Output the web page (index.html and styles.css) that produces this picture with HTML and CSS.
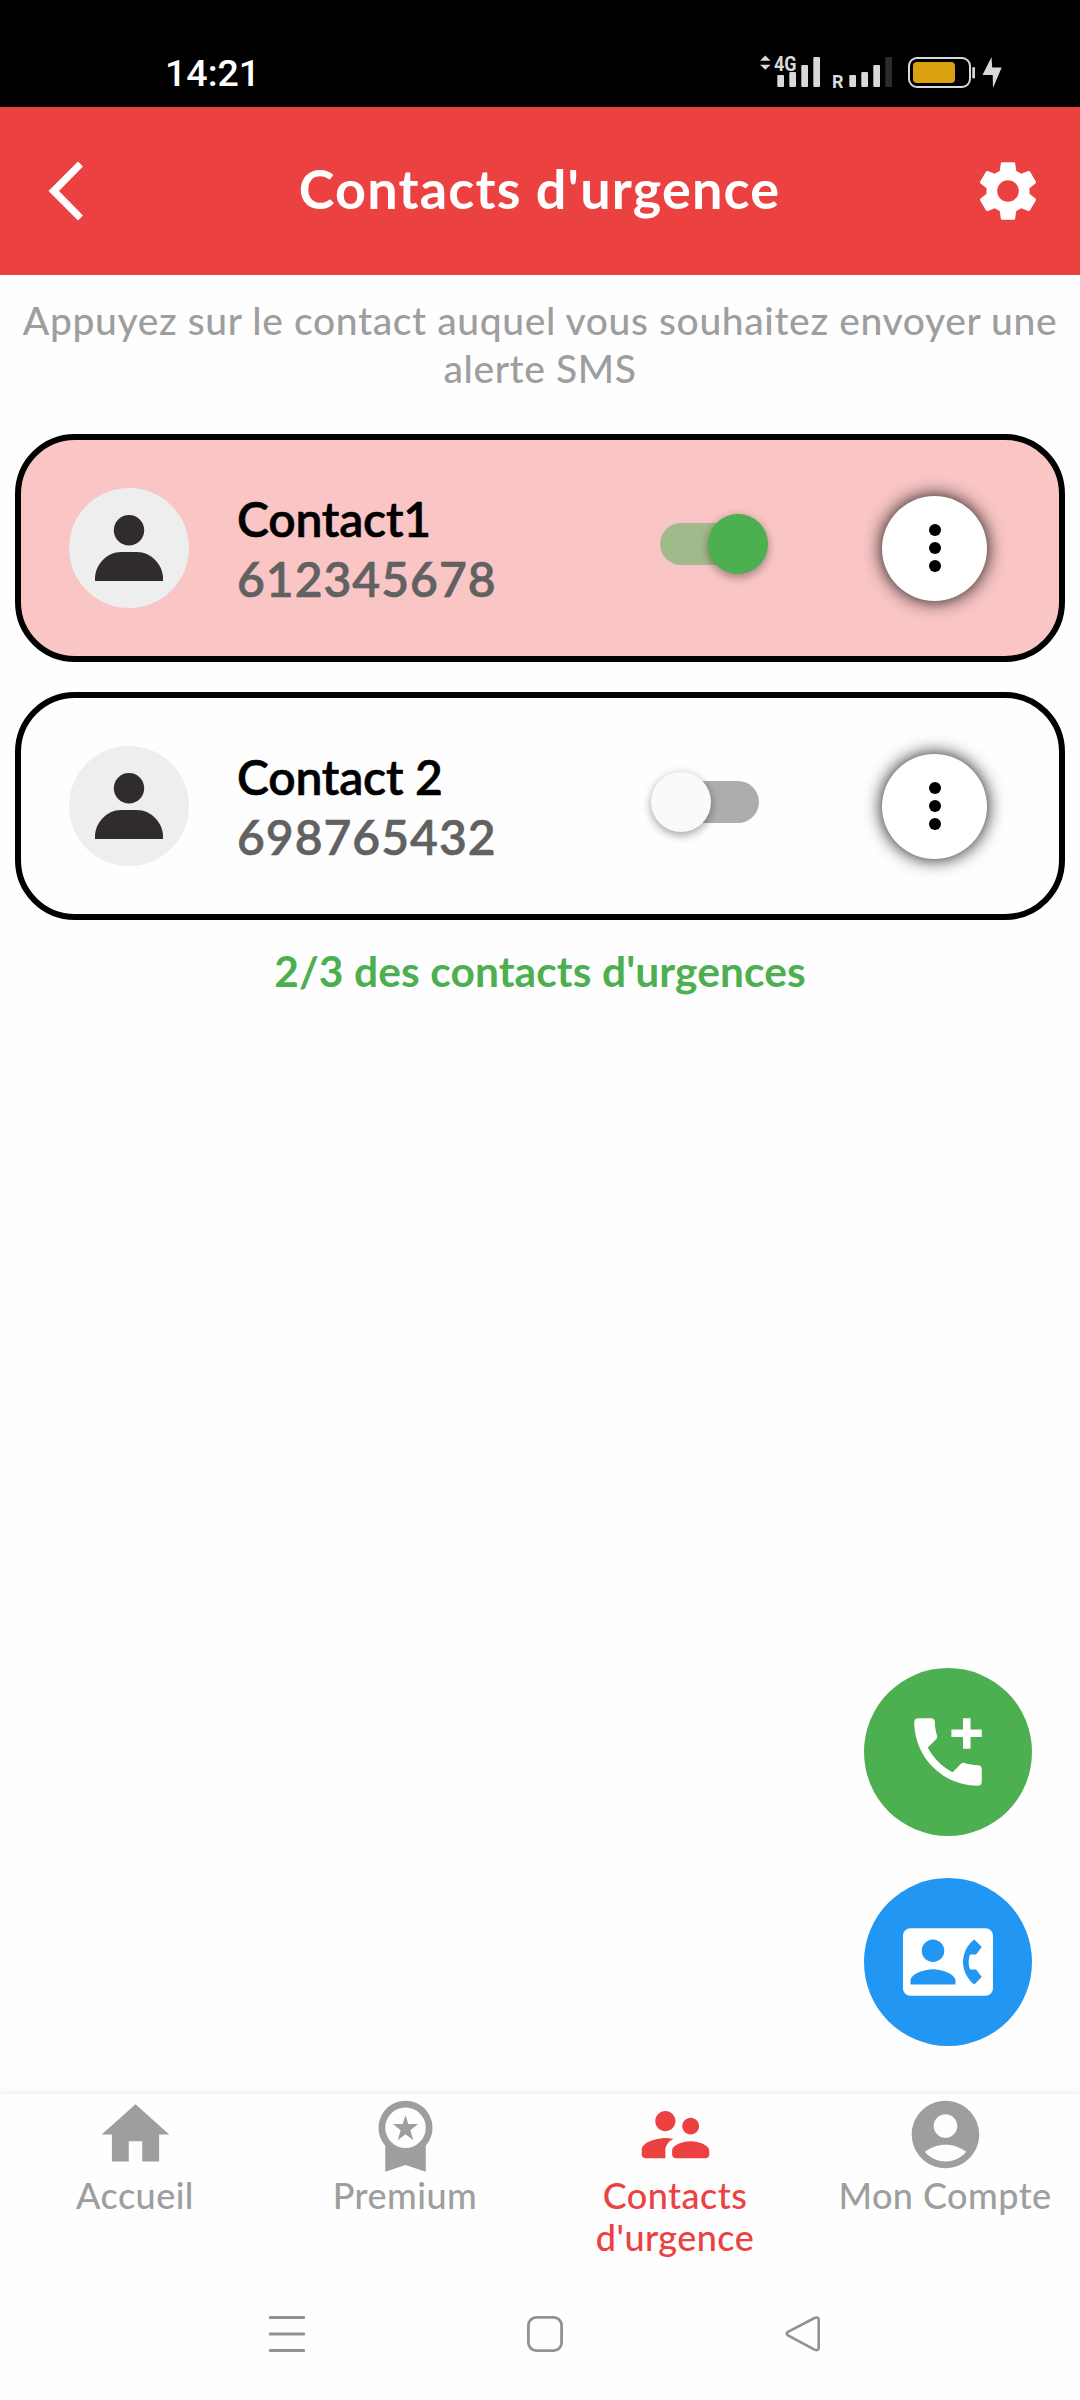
FILE: index.html
```html
<!DOCTYPE html>
<html lang="fr">
<head>
<meta charset="utf-8">
<title>Contacts d'urgence</title>
<link rel="stylesheet" href="styles.css">
</head>
<body>
<div class="status-bar">
  <span class="clock">14:21</span>
  <svg class="status-icons" width="244" height="50" viewBox="760 50 244 50" fill="#d9d9d9">
    <path d="M765.3 55.5l5.2 5.2h-10.4zM765.3 69.8l5.2-5h-10.4z"/>
    <text class="net" x="774" y="70.5" textLength="22.5" lengthAdjust="spacingAndGlyphs">4G</text>
    <rect x="777.3" y="75" width="6.7" height="12" rx="1"/>
    <rect x="789.3" y="72" width="6.7" height="15" rx="1"/>
    <rect x="801.3" y="65" width="6.7" height="22" rx="1"/>
    <rect x="813.3" y="57" width="6.7" height="30" rx="1"/>
    <text class="roam" x="832" y="88" textLength="11.5" lengthAdjust="spacingAndGlyphs">R</text>
    <rect x="849.3" y="75" width="6.7" height="12" rx="1"/>
    <rect x="861.3" y="72" width="6.7" height="15" rx="1"/>
    <rect x="873.3" y="65" width="6.7" height="22" rx="1"/>
    <rect x="885.3" y="57" width="6.7" height="30" rx="1" fill="#2b2b2b"/>
    <rect x="909" y="58" width="61" height="29" rx="8" fill="none" stroke="#d9d9d9" stroke-width="2"/>
    <rect x="913" y="62" width="42" height="21" rx="4" fill="#d9a00f"/>
    <rect x="972.3" y="67" width="2.7" height="11.5" rx="1.3"/>
    <path d="M991.5 57L982.5 75h10.2l.3 13 8.7-20.5h-9.5z"/>
  </svg>
</div>

<header class="app-bar">
  <svg class="back" width="36" height="60" viewBox="0 0 36 60"><path d="M30 .5l5 5L11 30l24 24.500-5 5L.500 30z" fill="#fff"/></svg>
  <h1>Contacts d'urgence</h1>
  <svg width="72" height="72" viewBox="0 0 24 24" fill="#fff"><path d="M19.14 12.94c.04-.3.06-.61.06-.94 0-.32-.02-.64-.07-.94l2.03-1.58c.18-.14.23-.41.12-.61l-1.92-3.32c-.12-.22-.37-.29-.59-.22l-2.39.96c-.5-.38-1.03-.7-1.62-.94l-.36-2.54c-.04-.24-.24-.41-.48-.41h-3.84c-.24 0-.43.17-.47.41l-.36 2.54c-.59.24-1.13.57-1.62.94l-2.39-.96c-.22-.08-.47 0-.59.22L2.74 8.87c-.12.21-.08.47.12.61l2.03 1.58c-.05.3-.09.63-.09.94s.02.64.07.94l-2.03 1.58c-.18.14-.23.41-.12.61l1.92 3.32c.12.22.37.29.59.22l2.39-.96c.5.38 1.03.7 1.62.94l.36 2.54c.05.24.24.41.48.41h3.84c.24 0 .44-.17.47-.41l.36-2.54c.59-.24 1.13-.56 1.62-.94l2.39.96c.22.08.47 0 .59-.22l1.92-3.32c.12-.22.07-.47-.12-.61l-2.01-1.58zM12 15.6c-1.98 0-3.6-1.62-3.6-3.6s1.62-3.6 3.6-3.6 3.6 1.62 3.6 3.6-1.62 3.6-3.6 3.6z"/></svg>
</header>

<main>
  <p class="hint">Appuyez sur le contact auquel vous souhaitez envoyer une alerte SMS</p>

  <div class="card selected">
    <span class="avatar"><svg width="68" height="66" viewBox="0 0 68 66" fill="#302b2d"><circle cx="34" cy="15.200" r="15.200"/><path d="M0 66V62C1 49 12 37 26 37h16c14 0 25 12 26 25v4z"/></svg></span>
    <div class="who"><span class="name">Contact1</span><span class="phone">612345678</span></div>
    <span class="switch on"><span class="thumb"></span></span>
    <span class="more"><svg width="12" height="48" viewBox="0 0 12 48"><circle cx="6" cy="6" r="6"/><circle cx="6" cy="24" r="6"/><circle cx="6" cy="42" r="6"/></svg></span>
  </div>

  <div class="card">
    <span class="avatar"><svg width="68" height="66" viewBox="0 0 68 66" fill="#302b2d"><circle cx="34" cy="15.200" r="15.200"/><path d="M0 66V62C1 49 12 37 26 37h16c14 0 25 12 26 25v4z"/></svg></span>
    <div class="who"><span class="name">Contact 2</span><span class="phone">698765432</span></div>
    <span class="switch"><span class="thumb"></span></span>
    <span class="more"><svg width="12" height="48" viewBox="0 0 12 48"><circle cx="6" cy="6" r="6"/><circle cx="6" cy="24" r="6"/><circle cx="6" cy="42" r="6"/></svg></span>
  </div>

  <p class="count">2/3 des contacts d'urgences</p>

  <div class="fabs">
    <span class="fab green"><svg width="90" height="90" viewBox="0 0 24 24" fill="#fff"><path d="M20 15.500c-1.250 0-2.450-.2-3.570-.57-.1-.03-.21-.05-.31-.05-.26 0-.51.1-.71.29l-2.200 2.200c-2.830-1.440-5.150-3.750-6.590-6.590l2.200-2.200c.28-.28.36-.67.25-1.020C8.700 6.450 8.500 5.250 8.500 4c0-.55-.45-1-1-1H4c-.55 0-1 .45-1 1 0 9.390 7.610 17 17 17 .55 0 1-.45 1-1v-3.500c0-.55-.45-1-1-1zM18 6V3h-2v3h-3.100v2H16v3.100h2V8h3V6z"/></svg></span>
    <span class="fab blue"><svg width="90" height="90" viewBox="0 0 24 24" fill="#fff"><path d="M22 3H2C.9 3 0 3.900 0 5v14c0 1.100.9 2 2 2h20c1.100 0 1.990-.9 1.990-2L24 5c0-1.100-.9-2-2-2zM8 6c1.660 0 3 1.340 3 3s-1.340 3-3 3-3-1.340-3-3 1.340-3 3-3zm6 12H2v-1c0-2 4-3.100 6-3.100s6 1.100 6 3.100v1zm3.850-4h1.640L21 16l-1.990 1.990c-1.310-.98-2.280-2.380-2.730-3.990-.18-.64-.28-1.310-.28-2s.1-1.360.28-2c.45-1.620 1.420-3.010 2.730-3.990L21 8l-1.510 2h-1.640c-.22.63-.35 1.300-.35 2s.13 1.370.35 2z"/></svg></span>
  </div>
</main>

<nav class="tabs">
  <div class="tab"><svg viewBox="0 0 24 24"><path d="M10 20v-6h4v6h5v-8h3L12 3 2 12h3v8z"/></svg><span>Accueil</span></div>
  <div class="tab"><svg viewBox="0 0 24 24"><path d="M20 10a8 8 0 1 0-14 5.300V23l6-2 6 2v-7.700A7.970 7.970 0 0 0 20 10zm-8 6a6 6 0 1 1 0-12 6 6 0 0 1 0 12z"/><path d="M12 6.300l.83 2.600h2.870l-2.250 1.850.85 2.950L12 11.900l-2.300 1.800.85-2.950L8.300 8.900h2.870z"/></svg><span>Premium</span></div>
  <div class="tab active"><svg viewBox="0 0 24 24"><path d="M16.500 12c1.380 0 2.490-1.120 2.490-2.500S17.880 7 16.500 7 14 8.120 14 9.500s1.120 2.500 2.500 2.500zM9 11c1.660 0 2.990-1.340 2.990-3S10.660 5 9 5 6 6.340 6 8s1.340 3 3 3zm7.500 3c-1.830 0-5.500.92-5.500 2.750V18c0 .55.45 1 1 1h9c.55 0 1-.45 1-1v-1.250c0-1.830-3.670-2.750-5.500-2.750zM9 13c-2.330 0-7 1.170-7 3.500V18c0 .55.45 1 1 1h6v-2.250c0-.85.33-2.340 2.370-3.470C10.500 13.100 9.660 13 9 13z"/></svg><span>Contacts<br>d'urgence</span></div>
  <div class="tab"><svg viewBox="0 0 24 24"><path d="M12 2C6.480 2 2 6.480 2 12s4.480 10 10 10 10-4.480 10-10S17.520 2 12 2zm0 4c1.930 0 3.500 1.570 3.500 3.500S13.930 13 12 13s-3.500-1.570-3.500-3.500S10.070 6 12 6zm0 14c-2.030 0-4.430-.82-6.140-2.880C7.550 15.800 9.680 15 12 15s4.450.8 6.140 2.120C16.430 19.180 14.030 20 12 20z"/></svg><span>Mon Compte</span></div>
</nav>

<div class="system-nav">
  <svg width="36" height="36" viewBox="0 0 36 36" fill="#919191"><rect width="36" height="3" rx=".8"/><rect y="16.500" width="36" height="3" rx=".8"/><rect y="33" width="36" height="3" rx=".8"/></svg>
  <svg width="36" height="36" viewBox="0 0 36 36" fill="none" stroke="#919191" stroke-width="2.800"><rect x="1.400" y="1.400" width="33.200" height="33.200" rx="8"/></svg>
  <svg width="36" height="36" viewBox="0 0 36 36" fill="none" stroke="#919191" stroke-width="2.600"><path d="M29.500 2L3 15.800Q.400 17.500 3 19.400L29.500 33.600Q33.700 35.200 33.700 31.500V4Q33.700.400 29.500 2z"/></svg>
</div>
</body>
</html>
```
FILE: styles.css
```css
* { box-sizing: border-box; }

body {
  margin: 0;
  width: 1080px;
  height: 2400px;
  display: flex;
  flex-direction: column;
  background: #fefefe;
  font-family: Lato, sans-serif;
  font-weight: 500;
}

svg { display: block; flex: none; }
h1, p { margin: 0; }

.status-bar {
  height: 107px;
  flex: none;
  padding: 50px 76px 0 165px;
  display: flex;
  justify-content: space-between;
  background: #000;
}
.clock {
  font: 500 37.500px/46px Roboto, sans-serif;
  color: #fff;
}
.net { font: 700 21px Roboto, sans-serif; }
.roam { font: 700 17.500px Roboto, sans-serif; }

.app-bar {
  height: 168px;
  flex: none;
  padding: 0 36px 0 48px;
  display: grid;
  grid-template-columns: 72px 1fr 72px;
  align-items: center;
  background: #ec4141;
  color: #fff;
}
.app-bar h1 {
  padding: 0 13px 5px 0;
  text-align: center;
  font-size: 54px;
  font-weight: 700;
  line-height: 64px;
  letter-spacing: 1.150px;
}

main {
  flex: 1;
  padding: 21px 15px 48px;
  display: flex;
  flex-direction: column;
}
.hint {
  margin-bottom: 42px;
  text-align: center;
  font-size: 39px;
  line-height: 48px;
  letter-spacing: .620px;
  color: #9e9e9e;
}

.card {
  height: 228px;
  margin-bottom: 30px;
  padding: 0 72px 0 48px;
  display: flex;
  align-items: center;
  border: 6px solid #000;
  border-radius: 60px;
  background: #fefefe;
}
.card.selected { background: #f9c5c5; }
.avatar {
  width: 120px;
  height: 120px;
  padding-bottom: 1px;
  display: flex;
  align-items: center;
  justify-content: center;
  border-radius: 50%;
  background: #eee;
}
.who {
  width: 418px;
  margin-left: 48px;
  padding-top: 1px;
  display: flex;
  flex-direction: column;
  font-size: 48px;
  font-weight: 600;
  line-height: 60px;
  -webkit-text-stroke: .6px;
}
.name { color: #000; letter-spacing: -.2px; }
.phone { color: #616161; letter-spacing: 1px; }

.switch {
  width: 99px;
  height: 42px;
  margin: 0 123px 9px 5px;
  display: flex;
  align-items: center;
  border-radius: 21px;
  background: #adadad;
}
.switch.on { background: #a2ba8b; justify-content: flex-end; }
.thumb {
  flex: none;
  width: 60px;
  height: 60px;
  margin: 0 -9px;
  border-radius: 50%;
  background: #fafafa;
  box-shadow: 0 4px 8px rgba(0, 0, 0, .25), 0 1px 10px rgba(0, 0, 0, .14);
}
.on .thumb { background: #4caf50; }

.more {
  width: 105px;
  height: 105px;
  display: flex;
  align-items: center;
  justify-content: center;
  border-radius: 50%;
  background: #fff;
  box-shadow: 0 0 18px rgba(0, 0, 0, .95);
}

.count {
  margin-top: -4px;
  text-align: center;
  font-size: 42.500px;
  font-weight: 700;
  line-height: 50px;
  letter-spacing: .1px;
  color: #4caf50;
}

.fabs {
  margin: auto 33px 0 auto;
  display: flex;
  flex-direction: column;
  gap: 42px;
}
.fab {
  width: 168px;
  height: 168px;
  display: flex;
  align-items: center;
  justify-content: center;
  border-radius: 50%;
}
.green { background: #4caf50; }
.blue { background: #2196f3; }

.tabs {
  height: 196px;
  flex: none;
  display: grid;
  grid-template-columns: repeat(4, 1fr);
  background: #fefefe;
  box-shadow: 0 0 10px rgba(0, 0, 0, .1);
  clip-path: inset(-12px 0 0 0);
}
.tab {
  display: flex;
  flex-direction: column;
  align-items: center;
  text-align: center;
  font-size: 36px;
  line-height: 42px;
  letter-spacing: .45px;
  color: #9e9e9e;
}
.tab svg { width: 81px; height: 81px; margin-bottom: -1px; fill: currentColor; }
.tab.active { color: #ec4141; }

.system-nav {
  height: 110px;
  flex: none;
  padding: 26px 259px 0 269px;
  display: flex;
  justify-content: space-between;
}
```
